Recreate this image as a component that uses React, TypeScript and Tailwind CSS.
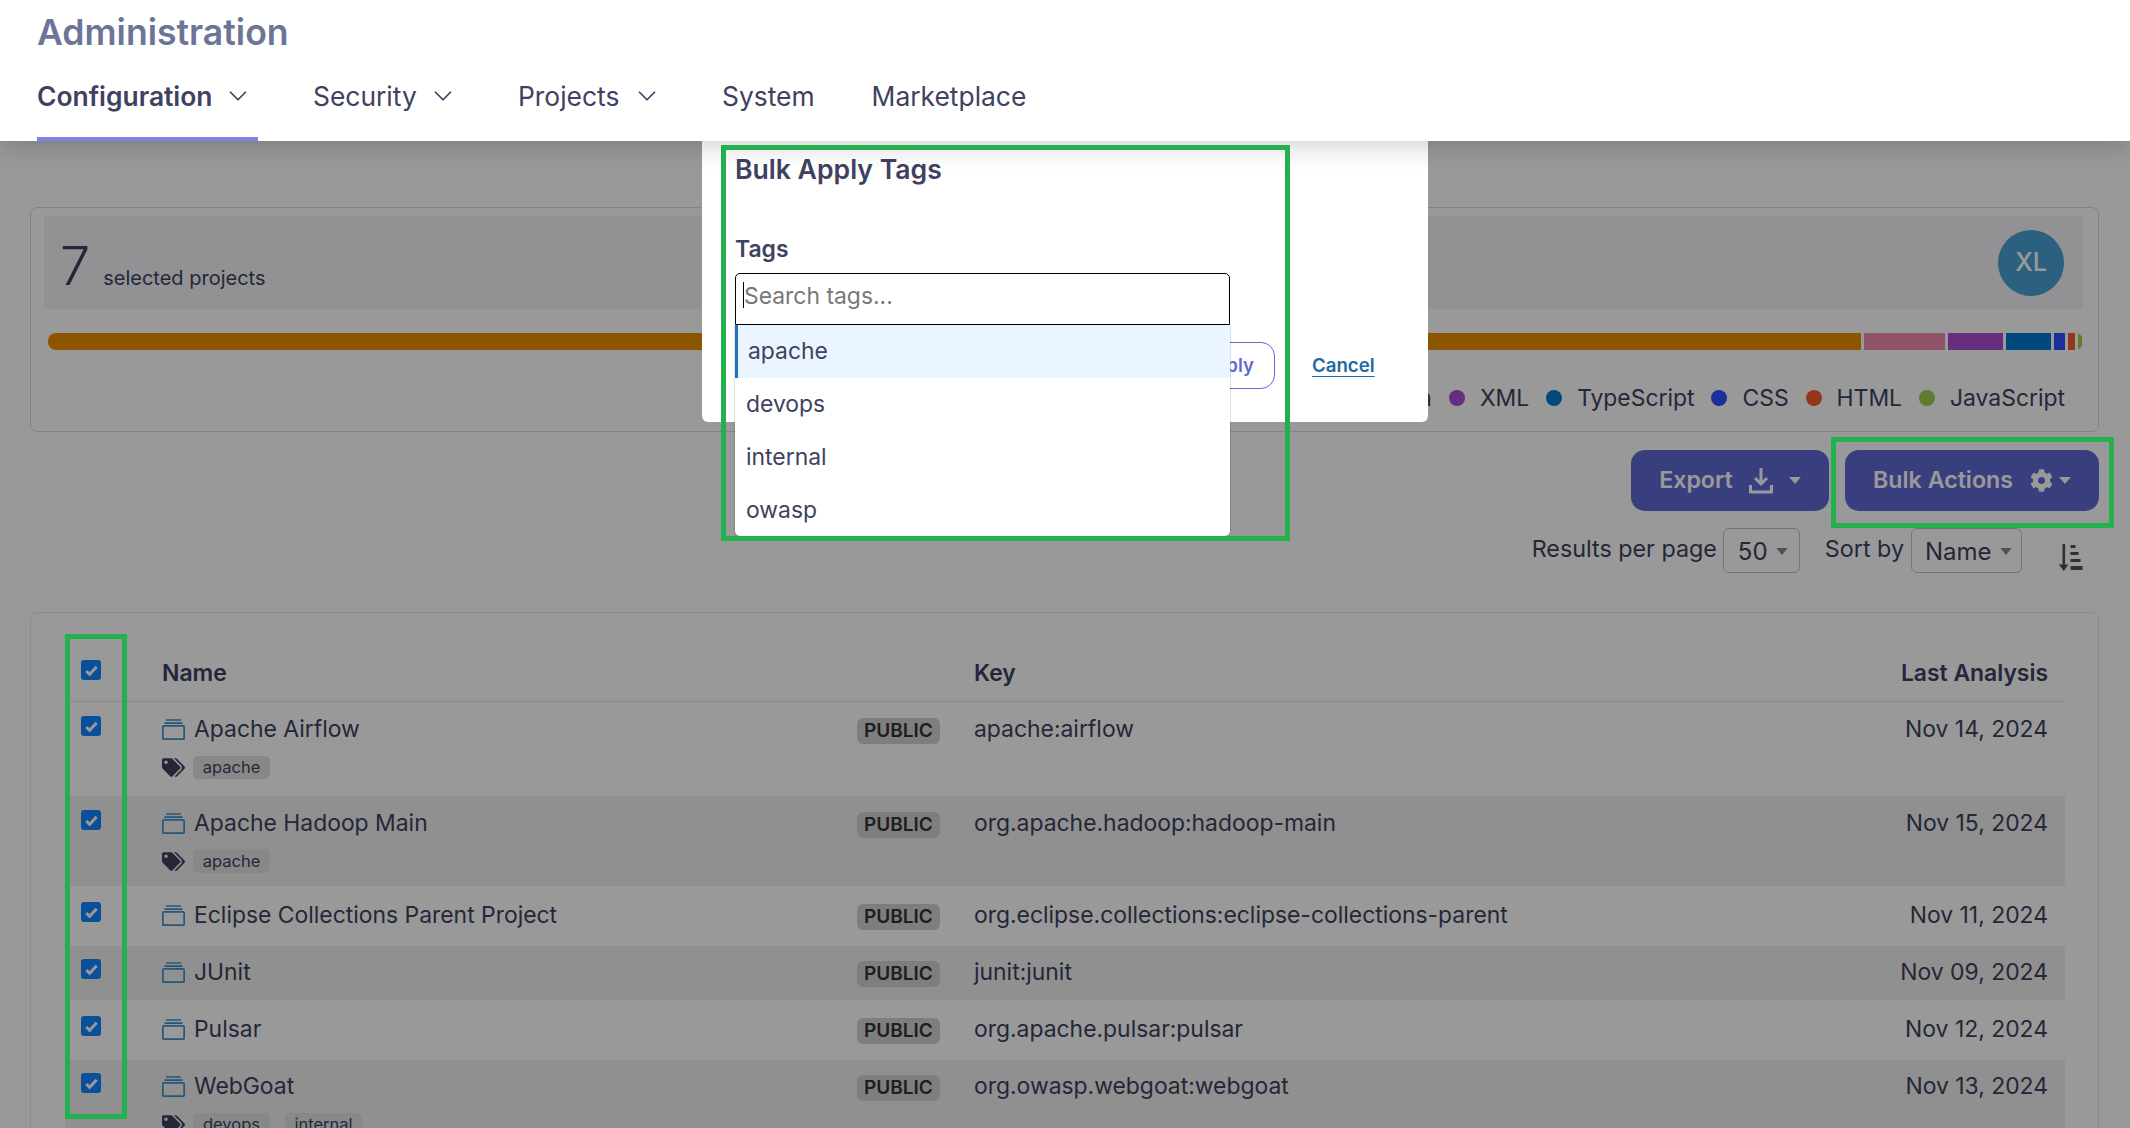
import React from "react";
import { ChevronDown } from "lucide-react";
import { FaCog, FaTags } from "react-icons/fa";

const Caret = ({ className }: { className: string }) => (
  <svg viewBox="0 0 10 6" className={className} fill="currentColor"><path d="M0 0h10L5 6z" /></svg>
);

const Check = () => (
  <div className="w-5 h-5 rounded-[3px] bg-[#1184ff] flex items-center justify-center">
    <svg viewBox="0 0 16 16" className="w-[15px] h-[15px]" fill="none" stroke="#fff" strokeWidth="3.2"><path d="M2.5 8.5l3.5 3.5 7.5-8" /></svg>
  </div>
);

const Qualifier = () => (
  <svg viewBox="0 0 23 21" className="w-[23px] h-[21px] shrink-0 text-[#3f93c9]" fill="none" stroke="currentColor" strokeWidth="1.7">
    <path d="M4 1h15M2.5 4.2h18" />
    <rect x="0.85" y="6.85" width="21.3" height="13.3" rx="1" />
  </svg>
);

const SortIcon = () => (
  <svg viewBox="0 0 26 27" className="ml-[34px] mt-[13px] w-[27px] h-[27px] text-[#505050]" fill="currentColor">
    <path d="M6 0h2.6v20.5H12L7.3 27 2.4 20.5H6z" />
    <path d="M14 1h5v3h-5zM14 8h8v3h-8zM14 15h10v3h-10zM14 22h12v4H14z" />
  </svg>
);

const Chip = ({ t }: { t: string }) => (
  <span className="h-[23px] w-[77px] rounded-[5px] bg-[#e3e3e3] text-[16.5px] leading-[23px] text-center text-[#3e4260]">{t}</span>
);

const rows = [
  { name: "Apache Airflow", key: "apache:airflow", date: "Nov 14, 2024", tags: ["apache"], cls: "h-[94px] pt-[14px]" },
  { name: "Apache Hadoop Main", key: "org.apache.hadoop:hadoop-main", date: "Nov 15, 2024", tags: ["apache"], cls: "h-[90px] pt-[14px] bg-[#f0f0f0]" },
  { name: "Eclipse Collections Parent Project", key: "org.eclipse.collections:eclipse-collections-parent", date: "Nov 11, 2024", tags: [], cls: "h-[60px] pt-[16px]" },
  { name: "JUnit", key: "junit:junit", date: "Nov 09, 2024", tags: [], cls: "h-[54px] pt-[13px] bg-[#f0f0f0]" },
  { name: "Pulsar", key: "org.apache.pulsar:pulsar", date: "Nov 12, 2024", tags: [], cls: "h-[60px] pt-[16px]" },
  { name: "WebGoat", key: "org.owasp.webgoat:webgoat", date: "Nov 13, 2024", tags: ["devops", "internal"], cls: "h-[97px] pt-[13px] bg-[#f0f0f0]" },
];

const legend = [
  ["bg-[#f28aad]", "Python"],
  ["bg-[#ac4bd4]", "XML"],
  ["bg-[#007bd2]", "TypeScript"],
  ["bg-[#2b4fff]", "CSS"],
  ["bg-[#f45c2b]", "HTML"],
  ["bg-[#9ecf4d]", "JavaScript"],
];

export default function App() {
  return (
    <div className="relative h-[1128px] w-[2130px] overflow-hidden bg-white text-[#3e4260] text-[22.9px] font-['Inter',sans-serif]">
      <header className="relative z-30 h-[141px] bg-white pl-[37px] shadow-[0_2px_28px_rgba(0,0,0,0.22)]">
        <h1 className="pt-[12px] text-[35.6px] leading-[42px] font-semibold text-[#6d7596]">Administration</h1>
        <nav className="mt-[11px] flex gap-[55px] h-[76px]">
          <div className="h-[76px] w-[221px] border-b-4 border-[#7b85e6] flex items-start font-semibold">
            <span className="w-[186px] text-[26.4px] leading-[62px]">Configuration</span>
            <ChevronDown className="w-[30px] h-[30px] mt-[16px]" strokeWidth={1.4} />
          </div>
          <div className="flex items-start w-[150px]">
            <span className="w-[115px] text-[26.4px] leading-[62px]">Security</span>
            <ChevronDown className="w-[30px] h-[30px] mt-[16px] shrink-0" strokeWidth={1.4} />
          </div>
          <div className="flex items-start w-[149px]">
            <span className="w-[114px] text-[26.4px] leading-[62px]">Projects</span>
            <ChevronDown className="w-[30px] h-[30px] mt-[16px] shrink-0" strokeWidth={1.4} />
          </div>
          <span className="text-[26.4px] leading-[62px]">System</span>
          <span className="text-[26.4px] leading-[62px] ml-[2px]">Marketplace</span>
        </nav>
      </header>

      <main className="pl-[30px] pr-[31px]">
        <section className="mt-[66px] h-[225px] rounded-[7px] border border-[#d8daea] pl-[13px] pr-[15px] pt-[8px]">
          <div className="h-[93px] bg-[#f3f4f8] flex items-center justify-between pl-[16px] pr-[19px]">
            <div className="flex items-baseline gap-[13px] pt-[6px]">
              <span className="text-[54px] leading-none font-light">7</span>
              <span className="text-[20px]">selected projects</span>
            </div>
            <div className="w-[66px] h-[66px] rounded-full bg-[#4aa0d4] text-white flex items-center justify-center text-[25px] font-medium">XL</div>
          </div>
          <div className="mt-[24px] ml-[4px] h-[17px] flex gap-[3px] overflow-hidden rounded-[8px]">
            <div className="w-[1813px] bg-[#e98e00]" />
            <div className="w-[81px] bg-[#f28aad]" />
            <div className="w-[55px] bg-[#ac4bd4]" />
            <div className="w-[45px] bg-[#007bd2]" />
            <div className="w-[11px] bg-[#2b4fff]" />
            <div className="w-[7px] bg-[#f45c2b]" />
            <div className="w-[4px] bg-[#9ecf4d]" />
          </div>
          <div className="mt-[34px] pr-[18px] flex justify-end items-center gap-[17px]">
            {legend.map(([c, t]) => (
              <span key={t} className="flex items-center gap-[15px] leading-[28px]">
                <span className={`w-4 h-4 rounded-full ${c}`} />
                {t}
              </span>
            ))}
          </div>
        </section>

        <div className="mt-[18px] flex justify-end gap-[16px] font-semibold text-white text-[23.2px]">
          <button className="w-[198px] h-[61px] rounded-[14px] bg-[#5f6ad2] flex items-center justify-center gap-[16px]">
            Export
            <svg viewBox="0 0 24 26" className="w-[24px] h-[26px]" fill="none" stroke="currentColor" strokeWidth="3">
              <path d="M12 0v15M6 10l6 6 6-6" /><path d="M1.5 17v7h21v-7" />
            </svg>
            <Caret className="w-[12px] h-[7px]" />
          </button>
          <button className="w-[254px] h-[61px] rounded-[14px] bg-[#5f6ad2] flex items-center justify-center gap-[17px]">
            Bulk Actions
            <span className="flex items-center gap-[6px]">
              <FaCog className="w-[23px] h-[23px]" />
              <Caret className="w-[12px] h-[7px]" />
            </span>
          </button>
        </div>

        <div className="mt-[17px] flex justify-end items-center pr-[16px] h-[45px] text-[23.3px]">
          <span className="mb-[2px]">Results per page</span>
          <span className="ml-[6px] w-[77px] h-[45px] rounded-[6px] border border-[#c4c4c4] flex items-center pl-[14px] gap-[8px] text-[24px] pt-[2px]">50<Caret className="w-[12px] h-[7px] text-[#888]" /></span>
          <span className="ml-[25px] mb-[2px]">Sort by</span>
          <span className="ml-[7px] w-[111px] h-[45px] rounded-[6px] border border-[#c4c4c4] flex items-center pl-[13px] gap-[8px] text-[24px] pt-[2px]">Name<Caret className="w-[12px] h-[7px] text-[#888]" /></span>
          <SortIcon />
        </div>

        <section className="mt-[39px] h-[600px] rounded-[7px] border border-[#e6e8f0] pl-[34px] pr-[33px]">
          <div className="h-[89px] border-b border-[#e3e3e3] grid grid-cols-[97px_695px_117px_1fr_auto] pt-[48px] font-semibold leading-[24px]">
            <div className="pl-[16px] -mt-[1px]"><Check /></div>
            <div>Name</div>
            <div />
            <div>Key</div>
            <div className="pr-[17px]">Last Analysis</div>
          </div>
          {rows.map((r) => (
            <div key={r.name} className={`grid grid-cols-[97px_695px_117px_1fr_auto] ${r.cls}`}>
              <div className="pl-[16px]"><Check /></div>
              <div>
                <div className="flex items-center gap-[9px] leading-[26px]"><Qualifier />{r.name}</div>
                {r.tags.length > 0 && (
                  <div className="mt-[14px] flex items-center gap-[8px]">
                    <FaTags className="w-[23px] h-[21px] shrink-0 text-[#3e4260]" />
                    <div className="flex gap-[15px]">{r.tags.map((t) => <Chip key={t} t={t} />)}</div>
                  </div>
                )}
              </div>
              <div className="pt-[2px]"><span className="block w-[83px] h-[26px] rounded-[6px] bg-[#d3d3d3] text-center text-[19px] leading-[26px] font-semibold text-[#333]">PUBLIC</span></div>
              <div className="leading-[26px]">{r.key}</div>
              <div className="pr-[17px] leading-[26px]">{r.date}</div>
            </div>
          ))}
        </section>
      </main>

      <div className="absolute inset-0 z-10 bg-black/40" />

      <div className="absolute z-20 left-[702px] top-[141px] w-[726px] h-[281px] rounded-b-[6px] bg-white pl-[33px]">
        <h2 className="pt-[12px] text-[26.6px] leading-[32px] font-semibold">Bulk Apply Tags</h2>
        <div className="mt-[50px] font-semibold leading-[28px]">Tags</div>
        <div className="absolute left-[33px] top-[132px] w-[495px] h-[52px] rounded-t-[5px] border-[1.5px] border-black pl-[8px] leading-[44px] text-[#777]">
          Search tags...
          <span className="absolute left-[7px] top-[8px] h-[26px] w-px bg-black" />
        </div>
        <ul className="absolute z-10 left-[33px] top-[184px] w-[495px] h-[211px] rounded-b-[5px] bg-white shadow-[0_0_2px_rgba(0,0,0,0.4)]">
          <li className="h-[53px] bg-[#ebf5ff] border-l-[3px] border-[#2272bd] pl-[10px] leading-[52px]">apache</li>
          <li className="h-[53px] pl-[11px] leading-[52px]">devops</li>
          <li className="h-[53px] pl-[11px] leading-[52px]">internal</li>
          <li className="h-[52px] pl-[11px] leading-[52px]">owasp</li>
        </ul>
        <div className="absolute left-[420px] top-[201px] flex items-center gap-[37px]">
          <button className="w-[153px] h-[47px] rounded-[14px] border border-[#5f6ad2] text-[#5f6ad2] text-[18.67px] font-semibold text-right pr-[20px]">Apply</button>
          <a className="text-[18.67px] font-semibold text-[#236a9f] underline underline-offset-[4px]">Cancel</a>
        </div>
      </div>

      <div className="absolute z-40 left-[721px] top-[145px] w-[569px] h-[396px] border-[5px] border-[#22b14c] pointer-events-none" />
      <div className="absolute z-40 left-[1831px] top-[437px] w-[283px] h-[91px] border-[5px] border-[#22b14c] pointer-events-none" />
      <div className="absolute z-40 left-[65px] top-[634px] w-[62px] h-[485px] border-[5px] border-[#22b14c] pointer-events-none" />
    </div>
  );
}
